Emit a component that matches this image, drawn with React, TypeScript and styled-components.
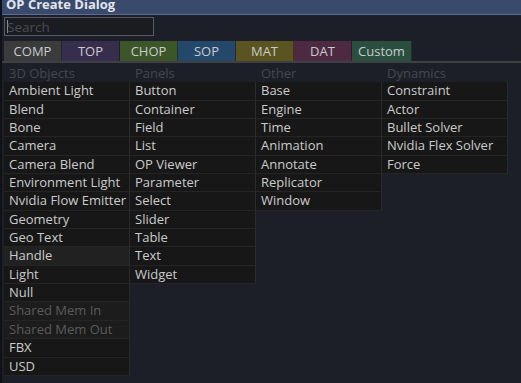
import React from "react";
import styled, { createGlobalStyle } from "styled-components";

const Global = createGlobalStyle`
  html, body {
    margin: 0;
    padding: 0;
    background: #1d1f28;
  }
  body {
    font-family: "Open Sans", "Noto Sans", sans-serif;
  }
`;

type Tab = { label: string; bg: string };

const tabs: Tab[] = [
  { label: "COMP", bg: "#3a3b3b" },
  { label: "TOP", bg: "#372d4d" },
  { label: "CHOP", bg: "#3d5629" },
  { label: "SOP", bg: "#24486a" },
  { label: "MAT", bg: "#5b5420" },
  { label: "DAT", bg: "#4e2a42" },
  { label: "Custom", bg: "#2a4f3e" },
];

type Entry = { name: string; disabled?: boolean; hover?: boolean };

const columns: { title: string; items: Entry[] }[] = [
  {
    title: "3D Objects",
    items: [
      { name: "Ambient Light" },
      { name: "Blend" },
      { name: "Bone" },
      { name: "Camera" },
      { name: "Camera Blend" },
      { name: "Environment Light" },
      { name: "Nvidia Flow Emitter" },
      { name: "Geometry" },
      { name: "Geo Text" },
      { name: "Handle", hover: true },
      { name: "Light" },
      { name: "Null" },
      { name: "Shared Mem In", disabled: true },
      { name: "Shared Mem Out", disabled: true },
      { name: "FBX" },
      { name: "USD" },
    ],
  },
  {
    title: "Panels",
    items: [
      { name: "Button" },
      { name: "Container" },
      { name: "Field" },
      { name: "List" },
      { name: "OP Viewer" },
      { name: "Parameter" },
      { name: "Select" },
      { name: "Slider" },
      { name: "Table" },
      { name: "Text" },
      { name: "Widget" },
    ],
  },
  {
    title: "Other",
    items: [
      { name: "Base" },
      { name: "Engine" },
      { name: "Time" },
      { name: "Animation" },
      { name: "Annotate" },
      { name: "Replicator" },
      { name: "Window" },
    ],
  },
  {
    title: "Dynamics",
    items: [
      { name: "Constraint" },
      { name: "Actor" },
      { name: "Bullet Solver" },
      { name: "Nvidia Flex Solver" },
      { name: "Force" },
    ],
  },
];

export default function App() {
  return (
    <>
      <Global />
      <Dialog>
        <TitleBar>
          <Title>OP Create Dialog</Title>
        </TitleBar>
        <SearchRow>
          <SearchBox>
            <Caret />
            <Placeholder>Search</Placeholder>
          </SearchBox>
        </SearchRow>
        <TabBar>
          {tabs.map((t) => (
            <TabButton key={t.label} $bg={t.bg}>
              {t.label}
            </TabButton>
          ))}
        </TabBar>
        <Lists>
          {columns.map((col) => (
            <Column key={col.title}>
              <Header>{col.title}</Header>
              {col.items.map((it) => (
                <Item key={it.name} $disabled={it.disabled} $hover={it.hover}>
                  {it.name}
                </Item>
              ))}
            </Column>
          ))}
        </Lists>
      </Dialog>
    </>
  );
}

const Dialog = styled.div`
  width: 521px;
  height: 383px;
  background: #1d1f28;
  border-left: 2px solid #111216;
  box-sizing: border-box;
  overflow: hidden;
  display: flex;
  flex-direction: column;
`;

const TitleBar = styled.div`
  height: 14px;
  background: #3a4a6d;
  border-bottom: 1px solid #5c6d95;
  display: flex;
  align-items: flex-end;
  overflow: hidden;
  padding-left: 4px;
`;

const Title = styled.div`
  font-size: 13px;
  font-weight: 700;
  color: #e2e6ee;
  line-height: 13px;
  margin-bottom: 3px;
`;

const SearchRow = styled.div`
  padding: 2px 0 0 2px;
  height: 24px;
`;

const SearchBox = styled.div`
  width: 150px;
  height: 19px;
  box-sizing: border-box;
  border: 1px solid #575a60;
  background: #1a1c22;
  display: flex;
  align-items: center;
  padding-left: 2px;
`;

const Caret = styled.div`
  width: 1px;
  height: 13px;
  background: #8a8d95;
`;

const Placeholder = styled.span`
  font-size: 13.5px;
  color: #4a4c52;
  margin-left: -1px;
`;

const TabBar = styled.div`
  display: flex;
  padding-left: 2px;
  height: 20px;
  border-bottom: 2px solid #3e4046;
`;

const TabButton = styled.div<{ $bg: string }>`
  width: 58px;
  height: 20px;
  box-sizing: border-box;
  background: ${(p) => p.$bg};
  border-right: 1px solid rgba(0, 0, 0, 0.35);
  color: #c9cbcd;
  font-size: 13px;
  display: flex;
  align-items: center;
  justify-content: center;
  &:last-child {
    width: 60px;
  }
`;

const Lists = styled.div`
  display: grid;
  grid-template-columns: repeat(4, 126px);
  padding: 1px 0 0 2px;
  align-items: start;
`;

const Column = styled.div`
  display: flex;
  flex-direction: column;
`;

const Header = styled.div`
  height: 18.35px;
  box-sizing: border-box;
  padding-left: 5px;
  font-size: 13px;
  line-height: 18px;
  color: #45474d;
`;

const Item = styled.div<{ $disabled?: boolean; $hover?: boolean }>`
  height: 18.35px;
  box-sizing: border-box;
  padding-left: 5px;
  font-size: 13px;
  line-height: 17.5px;
  white-space: nowrap;
  overflow: hidden;
  background: ${(p) => (p.$hover ? "#212121" : p.$disabled ? "#1c1c1c" : "#171717")};
  border-bottom: 1px solid #242424;
  border-right: 1px solid #2a2a2a;
  color: ${(p) => (p.$disabled ? "#5b5b5b" : "#cbcbcb")};
`;
